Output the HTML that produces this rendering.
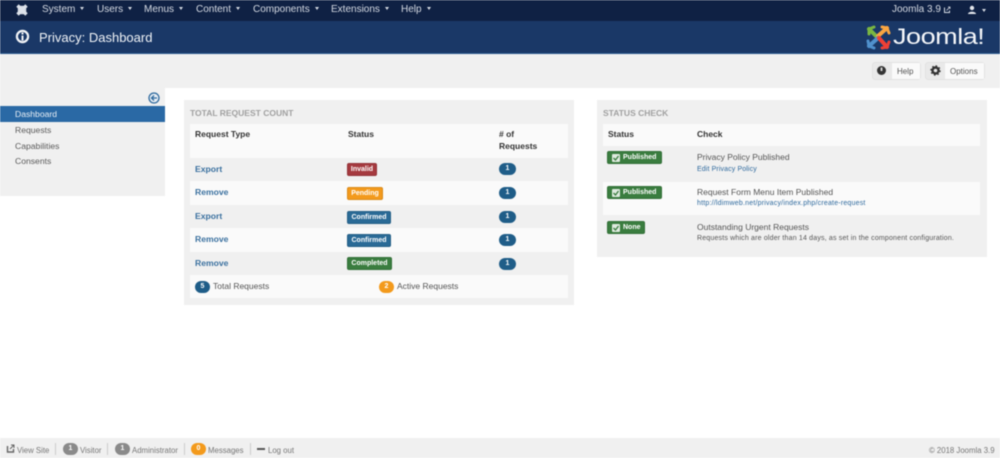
<!DOCTYPE html>
<html><head><meta charset="utf-8"><style>
html,body{margin:0;padding:0;background:#fff}
body{width:1000px;height:458px;overflow:hidden;position:relative;font-family:"Liberation Sans",sans-serif;font-size:9px;color:#555}
#w{position:absolute;left:0;top:0;width:1000px;height:458px;filter:blur(.5px)}
#w div,#w span.a,#w svg{position:absolute}
.t{white-space:nowrap;line-height:12px}
.n{color:#d5dae3;font-size:10px;top:4px}
.n:after{content:"";display:inline-block;border:2.5px solid transparent;border-top:3px solid #d5dae3;border-bottom:0;margin-left:5px;vertical-align:2px}
.h{font-weight:bold;color:#333;font-size:8.5px}
.l{color:#3a709f;font-size:8.6px;font-weight:bold;left:195px}
.lb{color:#fff;font-size:7px;font-weight:bold;border-radius:2px;height:13px;line-height:11px;text-align:center;box-sizing:border-box;border:1px solid rgba(0,0,0,.1)}
.c{border-radius:7px;color:#fff;font-size:7px;font-weight:bold;text-align:center;height:12px;line-height:12px;background:#1f5d88}
.g{color:#5b5b5b;font-size:8.6px;left:15px}
.f{color:#777;font-size:7.8px;top:444.5px}
.fb{height:12px;border-radius:7px;background:#8a8a8a;color:#fff;font-size:7px;font-weight:bold;text-align:center;line-height:12px;top:443px}
.s{width:1px;height:12px;background:#ccc;top:443px}
.ck{left:4px;top:1.5px}
.m{font-size:8.5px;color:#555}
</style></head><body><div id="w">
<div style="left:0;top:0;width:1000px;height:21px;background:#0f2144"></div>
<div style="left:0;top:21px;width:1000px;height:33px;background:#1a3867"></div>
<div style="left:0;top:53px;width:1000px;height:1px;background:#2a5a8f"></div>
<div style="left:0;top:54px;width:1000px;height:34px;background:#f0f0f0"></div>
<div style="left:0;top:88px;width:165px;height:108px;background:#f0f0f0"></div>

<svg style="left:15px;top:3px" width="14" height="14" viewBox="0 0 14 14"><path d="M2.5 2.5L11.5 11.5M11.5 2.5L2.5 11.5" stroke="#dde2ea" stroke-width="3.4"/><rect x="3.6" y="3.6" width="6.8" height="6.8" fill="none" stroke="#dde2ea" stroke-width="1.6"/></svg>
<div class="t n" style="left:42px">System</div>
<div class="t n" style="left:97px">Users</div>
<div class="t n" style="left:144px">Menus</div>
<div class="t n" style="left:196px">Content</div>
<div class="t n" style="left:253px">Components</div>
<div class="t n" style="left:331px">Extensions</div>
<div class="t n" style="left:401px">Help</div>
<div class="t" style="left:892px;top:4px;color:#d5dae3;font-size:10px">Joomla 3.9</div>
<svg style="left:943px;top:6px" width="8" height="8" viewBox="0 0 8 8"><path d="M1.5 1.5v5h5v-2" fill="none" stroke="#d5dae3"/><path d="M3.5 4.5L7 1M5 1h2v2" fill="none" stroke="#d5dae3" stroke-width=".8"/></svg>
<svg style="left:967px;top:5px" width="10" height="10" viewBox="0 0 10 10"><circle cx="5" cy="3" r="2.2" fill="#e4e7ec"/><path d="M1 9c0-3 8-3 8 0z" fill="#e4e7ec"/></svg>
<div style="left:982px;top:9px;border:2.5px solid transparent;border-top:3px solid #d5dae3;border-bottom:0"></div>

<svg style="left:15px;top:29px" width="16" height="16" viewBox="0 0 16 16"><circle cx="7.5" cy="7.5" r="5.6" fill="none" stroke="#f2f4f7" stroke-width="2.2"/><rect x="6.5" y="6.5" width="2" height="5" fill="#f2f4f7"/><rect x="6.5" y="3.5" width="2" height="2" fill="#f2f4f7"/></svg>
<div class="t" style="left:39px;top:28.5px;color:#f0f3f7;font-size:13px;line-height:17px">Privacy: Dashboard</div>

<svg style="left:865px;top:24px" width="27" height="27" viewBox="0 0 27 27" fill="none" stroke-width="4" stroke-linecap="round"><path d="M4 5L12 13" stroke="#7ab642"/><path d="M22 4L13 12" stroke="#f9a541"/><path d="M4 22L13 14" stroke="#5091cd"/><path d="M22 23L14 14" stroke="#ee4035"/><path d="M4 5L9 3M4 5v5" stroke="#7ab642" stroke-width="3"/><path d="M22 4l2 5M22 4l-5-1" stroke="#f9a541" stroke-width="3"/><path d="M4 22l-1-5M4 22l5 2" stroke="#5091cd" stroke-width="3"/><path d="M22 23l-5 1M22 23l2-5" stroke="#ee4035" stroke-width="3"/></svg>
<div class="t" style="left:893px;top:25px;color:#f4f6f9;font-size:22px;line-height:24px;letter-spacing:-.4px;transform:scaleX(1.23);transform-origin:0 0">Joomla!</div>

<div style="left:872px;top:62px;width:49px;height:18px;background:#e9e9e9;border:1px solid #e2e2e2;border-radius:3px;box-sizing:border-box"></div>
<div style="left:892px;top:63px;width:28px;height:16px;background:#fafafa"></div>
<svg style="left:876px;top:65px" width="11" height="11"><circle cx="5.5" cy="5.5" r="4.5" fill="#333"/><rect x="4.6" y="2.5" width="1.8" height="3.5" fill="#ddd"/></svg>
<div class="t" style="left:897px;top:65.5px;font-size:8px;color:#555">Help</div>
<div style="left:925px;top:62px;width:60px;height:18px;background:#e9e9e9;border:1px solid #e2e2e2;border-radius:3px;box-sizing:border-box"></div>
<div style="left:945px;top:63px;width:39px;height:16px;background:#fafafa"></div>
<svg style="left:930px;top:65px" width="11" height="11"><circle cx="5.5" cy="5.5" r="3" fill="none" stroke="#333" stroke-width="2.4"/><circle cx="5.5" cy="5.5" r="4.6" fill="none" stroke="#333" stroke-width="1.2" stroke-dasharray="1.6 2"/></svg>
<div class="t" style="left:950px;top:65.5px;font-size:8px;color:#555">Options</div>

<svg style="left:148px;top:92px" width="12" height="12"><circle cx="6" cy="6" r="5" fill="#e8eef4" stroke="#2f6a9e" stroke-width="1.3"/><path d="M9 6H3.5M6 3.5L3.5 6L6 8.5" fill="none" stroke="#2f6a9e" stroke-width="1.3"/></svg>
<div style="left:0;top:106px;width:165px;height:16px;background:#2a69a5"></div>
<div class="t g" style="top:108px;color:#e8eef5">Dashboard</div>
<div class="t g" style="top:124px">Requests</div>
<div class="t g" style="top:139.5px">Capabilities</div>
<div class="t g" style="top:155px">Consents</div>

<div style="left:184px;top:100px;width:390px;height:205px;background:#f0f0f0"></div>
<div class="t" style="left:190px;top:106.5px;color:#a0a0a0;font-weight:bold;font-size:8.5px">TOTAL REQUEST COUNT</div>
<div style="left:190px;top:124px;width:378px;height:34px;background:#fafafa"></div>
<div style="left:190px;top:181px;width:378px;height:24px;background:#fafafa"></div>
<div style="left:190px;top:228px;width:378px;height:24px;background:#fafafa"></div>
<div style="left:190px;top:275px;width:378px;height:23px;background:#fafafa"></div>
<div class="t h" style="left:195px;top:128px">Request Type</div>
<div class="t h" style="left:348px;top:128px">Status</div>
<div class="t h" style="left:499px;top:128px;line-height:12px">#&nbsp;of<br>Requests</div>

<div class="t l" style="top:163px">Export</div><div class="lb" style="left:347px;top:163px;width:30px;background:#a53a3f">Invalid</div><div class="c" style="left:499px;top:163px;width:17px">1</div>
<div class="t l" style="top:186px">Remove</div><div class="lb" style="left:347px;top:187px;width:36px;background:#f39a1c">Pending</div><div class="c" style="left:499px;top:187px;width:17px">1</div>
<div class="t l" style="top:210px">Export</div><div class="lb" style="left:347px;top:211px;width:44px;background:#2a6a96">Confirmed</div><div class="c" style="left:499px;top:211px;width:17px">1</div>
<div class="t l" style="top:233px">Remove</div><div class="lb" style="left:347px;top:234px;width:44px;background:#2a6a96">Confirmed</div><div class="c" style="left:499px;top:234px;width:17px">1</div>
<div class="t l" style="top:257px">Remove</div><div class="lb" style="left:347px;top:257px;width:45px;background:#3a7d3f">Completed</div><div class="c" style="left:499px;top:258px;width:17px">1</div>
<div class="c" style="left:195px;top:281px;width:15px">5</div><div class="t m" style="left:213px;top:280px">Total Requests</div>
<div class="c" style="left:379px;top:281px;width:15px;background:#f39a1c">2</div><div class="t m" style="left:397px;top:280px">Active Requests</div>

<div style="left:597px;top:100px;width:390px;height:157px;background:#f0f0f0"></div>
<div class="t" style="left:603px;top:106.5px;color:#a0a0a0;font-weight:bold;font-size:8.5px">STATUS CHECK</div>
<div style="left:603px;top:124px;width:377px;height:22px;background:#fafafa"></div>
<div style="left:603px;top:182px;width:377px;height:33px;background:#fafafa"></div>
<div class="t h" style="left:608px;top:128px">Status</div>
<div class="t h" style="left:697px;top:128px">Check</div>

<div class="lb" style="left:607px;top:151px;width:55px;background:#3a7d3f;text-align:left;padding-left:15px"><svg class="ck" width="8" height="8"><rect width="8" height="8" rx="1" fill="#dfeadf"/><path d="M1.5 4l2 2L6.5 2" fill="none" stroke="#3a7d3f" stroke-width="1.3"/></svg>Published</div>
<div class="t m" style="left:697px;top:151px">Privacy Policy Published</div>
<div class="t" style="left:697px;top:164px;font-size:7px;color:#2f6a9e;letter-spacing:.12px">Edit Privacy Policy</div>
<div class="lb" style="left:607px;top:186px;width:55px;background:#3a7d3f;text-align:left;padding-left:15px"><svg class="ck" width="8" height="8"><rect width="8" height="8" rx="1" fill="#dfeadf"/><path d="M1.5 4l2 2L6.5 2" fill="none" stroke="#3a7d3f" stroke-width="1.3"/></svg>Published</div>
<div class="t m" style="left:697px;top:186px">Request Form Menu Item Published</div>
<div class="t" style="left:697px;top:198px;font-size:7px;color:#2f6a9e;letter-spacing:.2px">http://ldimweb.net/privacy/index.php/create-request</div>
<div class="lb" style="left:607px;top:221px;width:38px;background:#3a7d3f;text-align:left;padding-left:15px"><svg class="ck" width="8" height="8"><rect width="8" height="8" rx="1" fill="#dfeadf"/><path d="M1.5 4l2 2L6.5 2" fill="none" stroke="#3a7d3f" stroke-width="1.3"/></svg>None</div>
<div class="t m" style="left:697px;top:221px">Outstanding Urgent Requests</div>
<div class="t" style="left:697px;top:233px;font-size:7px;color:#555;letter-spacing:.18px">Requests which are older than 14 days, as set in the component configuration.</div>

<div style="left:0;top:438px;width:1000px;height:20px;background:#f0f0f0"></div>
<svg style="left:6px;top:444px" width="9" height="9"><path d="M1.5 2v6h6V5" fill="none" stroke="#666" stroke-width="1.4"/><path d="M4 5l4-4M5 1h3v3" fill="none" stroke="#666"/></svg>
<div class="t f" style="left:17px">View Site</div><div class="s" style="left:55px"></div>
<div class="fb" style="left:63px;width:15px">1</div><div class="t f" style="left:80px">Visitor</div><div class="s" style="left:107px"></div>
<div class="fb" style="left:115px;width:15px">1</div><div class="t f" style="left:132px">Administrator</div><div class="s" style="left:184px"></div>
<div class="fb" style="left:191px;width:15px;background:#f39a1c">0</div><div class="t f" style="left:208px">Messages</div><div class="s" style="left:250px"></div>
<div style="left:257px;top:448px;width:8px;height:1.5px;background:#555"></div><div class="t f" style="left:268px">Log out</div>
<div class="t f" style="left:929px">© 2018 Joomla 3.9</div>
</div></body></html>
